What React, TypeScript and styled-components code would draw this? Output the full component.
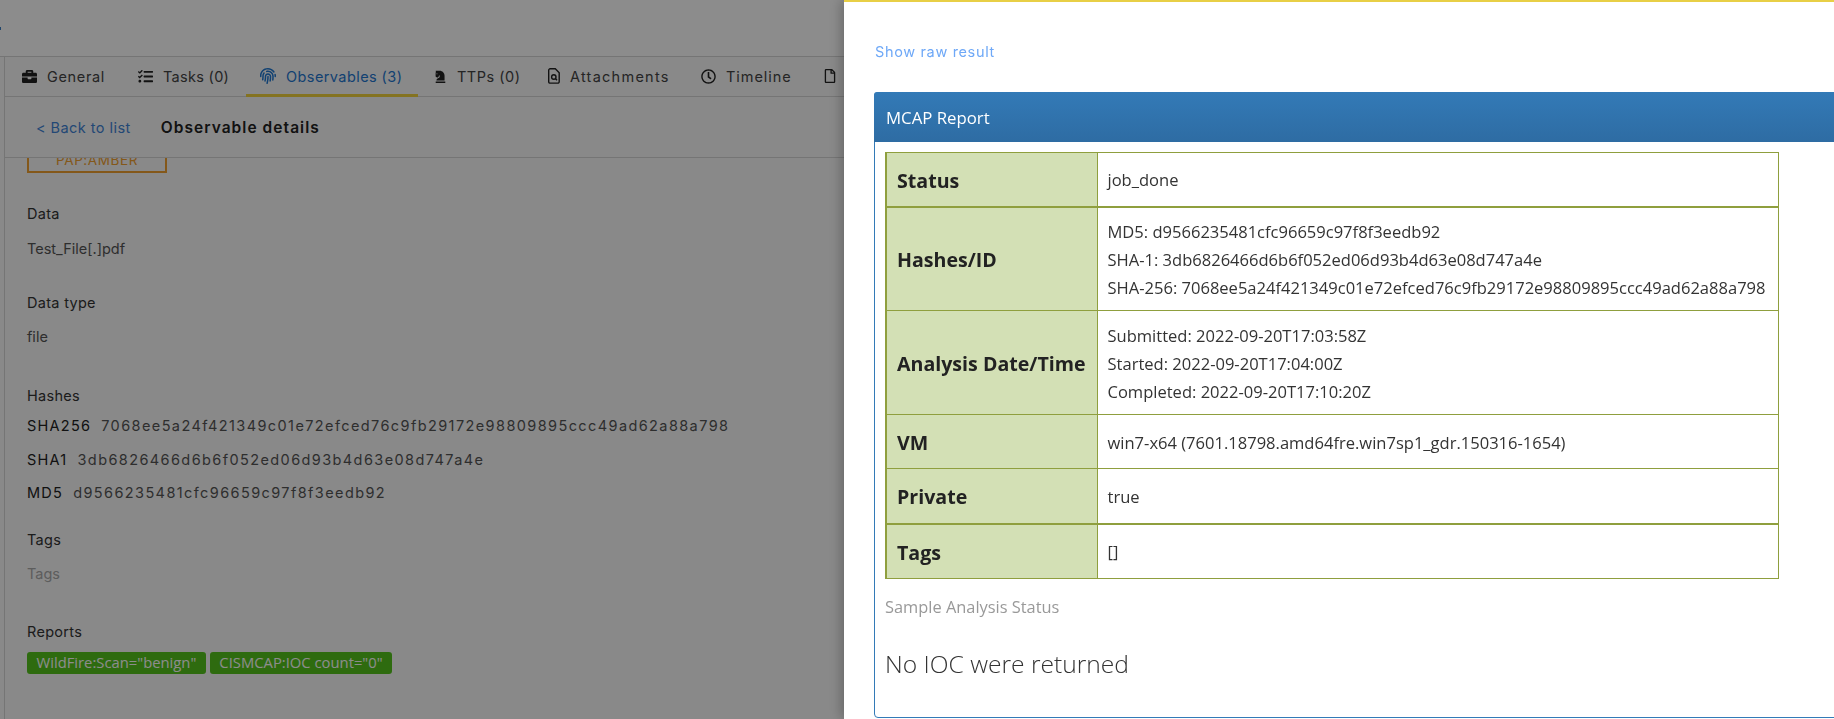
import React from "react";
import styled, { createGlobalStyle } from "styled-components";
import { FaBriefcase, FaTasks, FaFingerprint, FaChessKnight, FaRegClock, FaRegFile } from "react-icons/fa";

const GlobalStyle = createGlobalStyle`
  html, body {
    margin: 0;
    height: 100%;
    overflow: hidden;
  }
  body {
    font-family: "Inter", "DejaVu Sans", sans-serif;
    background: #f9f9f9;
  }
`;

const Page = styled.div`
  width: 1834px;
  height: 719px;
  display: flex;
  flex-direction: column;
  overflow: hidden;
`;

const TopBar = styled.div`
  height: 56px;
  flex: none;
  border-bottom: 1px solid #d6d6d6;
  background: #ffffff;
`;

const TopMark = styled.div`
  width: 1px;
  height: 3px;
  margin-top: 27px;
  background: #3b7fc4;
`;

const Body = styled.div`
  flex: 1;
  display: flex;
  min-height: 0;
`;

const Rail = styled.div`
  width: 4px;
  flex: none;
  border-right: 1px solid #d6d6d6;
`;

const Main = styled.div`
  flex: 1;
  display: flex;
  flex-direction: column;
  min-width: 0;
`;

const Tabs = styled.div`
  height: 39px;
  flex: none;
  display: flex;
  padding-left: 17px;
  border-bottom: 1px solid #d6d6d6;
`;

const Tab = styled.div<{ $active?: boolean; $width: number; $spacing: number }>`
  width: ${(p) => p.$width}px;
  flex: none;
  box-sizing: border-box;
  display: flex;
  align-items: center;
  gap: 10px;
  height: 40px;
  padding-left: ${(p) => (p.$active ? 14 : 0)}px;
  padding-top: 1px;
  margin-right: ${(p) => (p.$active ? 16 : 0)}px;
  font-size: 14.5px;
  letter-spacing: ${(p) => p.$spacing}px;
  white-space: nowrap;
  color: ${(p) => (p.$active ? "#1f77d0" : "#444444")};
  border-bottom: 3px solid ${(p) => (p.$active ? "#f1d13c" : "transparent")};

  svg {
    flex: none;
    color: ${(p) => (p.$active ? "#1f77d0" : "#222222")};
  }
`;

const DetailHeader = styled.div`
  height: 60px;
  flex: none;
  display: flex;
  align-items: center;
  padding-left: 31px;
  border-bottom: 1px solid #d6d6d6;
  background: #f9f9f9;
`;

const BackLink = styled.a`
  font-size: 14.5px;
  letter-spacing: 0.45px;
  color: #3f83d6;
  margin-right: 30px;
`;

const DetailTitle = styled.div`
  font-size: 15.5px;
  font-weight: 600;
  letter-spacing: 1.05px;
  color: #222222;
`;

const Content = styled.div`
  flex: 1;
  min-height: 0;
  overflow: hidden;
  padding-left: 22px;
`;

const PapTag = styled.div`
  width: 140px;
  height: 22px;
  box-sizing: border-box;
  margin-top: -7px;
  border: 2px solid #f0a030;
  border-top: 0;
  color: #f0a030;
  font-size: 13.5px;
  text-align: center;
  letter-spacing: 0.6px;
  line-height: 18px;
`;

const Label = styled.div<{ $top: number }>`
  margin-top: ${(p) => p.$top}px;
  font-size: 14.5px;
  line-height: 20px;
  letter-spacing: 0.3px;
  color: #333333;
`;

const Value = styled.div<{ $top: number; $muted?: boolean }>`
  margin-top: ${(p) => p.$top}px;
  font-size: 14.5px;
  line-height: 20px;
  letter-spacing: 0;
  color: ${(p) => (p.$muted ? "#aaaaaa" : "#555555")};
`;

const HashRow = styled.div<{ $top: number }>`
  margin-top: ${(p) => p.$top}px;
  display: flex;
  gap: 10px;
  font-size: 14.5px;
  line-height: 20px;
  white-space: nowrap;
`;

const HashName = styled.span`
  color: #222222;
  letter-spacing: 1.25px;
`;

const HashText = styled.span`
  color: #555555;
  letter-spacing: 1.4px;
`;

const Badges = styled.div`
  display: flex;
  gap: 4px;
  margin-top: 10px;
`;

const Badge = styled.span`
  height: 22px;
  box-sizing: border-box;
  padding: 0 9.5px;
  border-radius: 3px;
  background: #55c31d;
  color: #ffffff;
  font-family: "Open Sans", sans-serif;
  font-size: 14.8px;
  line-height: 21px;
  white-space: nowrap;
`;

const Backdrop = styled.div`
  position: fixed;
  inset: 0;
  background: rgba(0, 0, 0, 0.45);
`;

const Drawer = styled.div`
  position: fixed;
  top: 0;
  right: 0;
  bottom: 0;
  left: 844px;
  box-sizing: border-box;
  padding: 0 0 0 30px;
  overflow: hidden;
  background: #ffffff;
  border-top: 2px solid #e8cf46;
  box-shadow: -3px 0 12px rgba(0, 0, 0, 0.25);
`;

const RawLink = styled.a`
  display: block;
  margin: 40px 0 0 1px;
  height: 20px;
  font-size: 14.5px;
  line-height: 20px;
  letter-spacing: 0.65px;
  color: #6ea8f7;
`;

const ReportPanel = styled.div`
  width: 1100px;
  height: 626px;
  box-sizing: border-box;
  margin-top: 30px;
  border: 1px solid #337ab7;
  border-radius: 4px;
  font-family: "Open Sans", "Noto Sans", sans-serif;
`;

const ReportHeading = styled.div`
  height: 50px;
  box-sizing: border-box;
  margin: -1px -1px 0;
  padding: 1px 0 0 12px;
  border-radius: 3px 3px 0 0;
  background: linear-gradient(to bottom, #337ab7 0%, #2e6ca3 100%);
  color: #ffffff;
  font-size: 16.8px;
  line-height: 50px;
`;

const ReportBody = styled.div`
  padding: 10px;
`;

const ReportTable = styled.table`
  width: 894px;
  border-collapse: collapse;
  table-layout: fixed;
`;

const Row = styled.tr<{ $height: number; $thick?: boolean }>`
  height: ${(p) => p.$height}px;
  border-bottom: ${(p) => (p.$thick ? 2 : 1)}px solid #8f9f3e;
`;

const RowLabel = styled.th`
  width: 211px;
  box-sizing: border-box;
  padding: 2px 10px 0;
  border: 1px solid #8f9f3e;
  border-left-width: 2px;
  border-bottom-width: inherit;
  background: #d3e0b5;
  color: #222222;
  font-size: 19.6px;
  font-weight: 700;
  text-align: left;
  white-space: nowrap;
`;

const RowValue = styled.td`
  padding: 2px 10px 0;
  border: 1px solid #8f9f3e;
  border-bottom-width: inherit;
  color: #333333;
  font-size: 16.55px;
  line-height: 28px;
  white-space: nowrap;
`;

const SampleStatus = styled.div`
  margin-top: 17px;
  color: #999999;
  font-size: 16.4px;
  line-height: 22px;
`;

const NoIoc = styled.h3`
  margin: 31px 0 0;
  color: #333333;
  font-size: 24.6px;
  font-weight: 300;
  line-height: 30px;
`;

const AttachmentIcon = () => (
  <svg width="12" height="16" viewBox="0 0 12 16" fill="none" stroke="currentColor" strokeWidth="1.4">
    <path d="M1.7 0.8h5.6l3.9 3.9v9a1.4 1.4 0 0 1-1.4 1.4H1.7a1.4 1.4 0 0 1-1-1.4V2.2a1.4 1.4 0 0 1 1-1.4z" />
    <circle cx="5.8" cy="9" r="2.2" />
    <path d="M7.4 10.6l1.6 1.6" />
  </svg>
);

export default function App(): React.ReactElement {
  return (
    <Page>
      <GlobalStyle />
      <TopBar>
        <TopMark />
      </TopBar>
      <Body>
        <Rail />
        <Main>
          <Tabs>
            <Tab $width={116} $spacing={0.65}><FaBriefcase size={15} />General</Tab>
            <Tab $width={108} $spacing={0.3}><FaTasks size={15} />Tasks (0)</Tab>
            <Tab $active $width={172} $spacing={0.42}><FaFingerprint size={16} />Observables (3)</Tab>
            <Tab $width={114} $spacing={0.5}><FaChessKnight size={13} />TTPs (0)</Tab>
            <Tab $width={153} $spacing={1.25}><AttachmentIcon />Attachments</Tab>
            <Tab $width={122} $spacing={0.95}><FaRegClock size={15} />Timeline</Tab>
            <Tab $width={20} $spacing={0}><FaRegFile size={14} /></Tab>
          </Tabs>
          <DetailHeader>
            <BackLink>&lt; Back to list</BackLink>
            <DetailTitle>Observable details</DetailTitle>
          </DetailHeader>
          <Content>
            <PapTag>PAP:AMBER</PapTag>
            <Label $top={31}>Data</Label>
            <Value $top={15}>Test_File[.]pdf</Value>
            <Label $top={34}>Data type</Label>
            <Value $top={14}>file</Value>
            <Label $top={39}>Hashes</Label>
            <HashRow $top={10}><HashName>SHA256</HashName><HashText>7068ee5a24f421349c01e72efced76c9fb29172e98809895ccc49ad62a88a798</HashText></HashRow>
            <HashRow $top={14}><HashName>SHA1</HashName><HashText>3db6826466d6b6f052ed06d93b4d63e08d747a4e</HashText></HashRow>
            <HashRow $top={13}><HashName>MD5</HashName><HashText>d9566235481cfc96659c97f8f3eedb92</HashText></HashRow>
            <Label $top={27}>Tags</Label>
            <Value $top={14} $muted>Tags</Value>
            <Label $top={38}>Reports</Label>
            <Badges>
              <Badge>WildFire:Scan="benign"</Badge>
              <Badge>CISMCAP:IOC count="0"</Badge>
            </Badges>
          </Content>
        </Main>
      </Body>
      <Backdrop />
      <Drawer>
        <RawLink>Show raw result</RawLink>
        <ReportPanel>
          <ReportHeading>MCAP Report</ReportHeading>
          <ReportBody>
            <ReportTable>
              <tbody>
                <Row $height={54} $thick>
                  <RowLabel>Status</RowLabel>
                  <RowValue>job_done</RowValue>
                </Row>
                <Row $height={104}>
                  <RowLabel>Hashes/ID</RowLabel>
                  <RowValue>
                    MD5: d9566235481cfc96659c97f8f3eedb92<br />
                    SHA-1: 3db6826466d6b6f052ed06d93b4d63e08d747a4e<br />
                    SHA-256: 7068ee5a24f421349c01e72efced76c9fb29172e98809895ccc49ad62a88a798
                  </RowValue>
                </Row>
                <Row $height={104}>
                  <RowLabel>Analysis Date/Time</RowLabel>
                  <RowValue>
                    Submitted: 2022-09-20T17:03:58Z<br />
                    Started: 2022-09-20T17:04:00Z<br />
                    Completed: 2022-09-20T17:10:20Z
                  </RowValue>
                </Row>
                <Row $height={54}>
                  <RowLabel>VM</RowLabel>
                  <RowValue>win7-x64 (7601.18798.amd64fre.win7sp1_gdr.150316-1654)</RowValue>
                </Row>
                <Row $height={55} $thick>
                  <RowLabel>Private</RowLabel>
                  <RowValue>true</RowValue>
                </Row>
                <Row $height={55}>
                  <RowLabel>Tags</RowLabel>
                  <RowValue>[]</RowValue>
                </Row>
              </tbody>
            </ReportTable>
            <SampleStatus>Sample Analysis Status</SampleStatus>
            <NoIoc>No IOC were returned</NoIoc>
          </ReportBody>
        </ReportPanel>
      </Drawer>
    </Page>
  );
}
